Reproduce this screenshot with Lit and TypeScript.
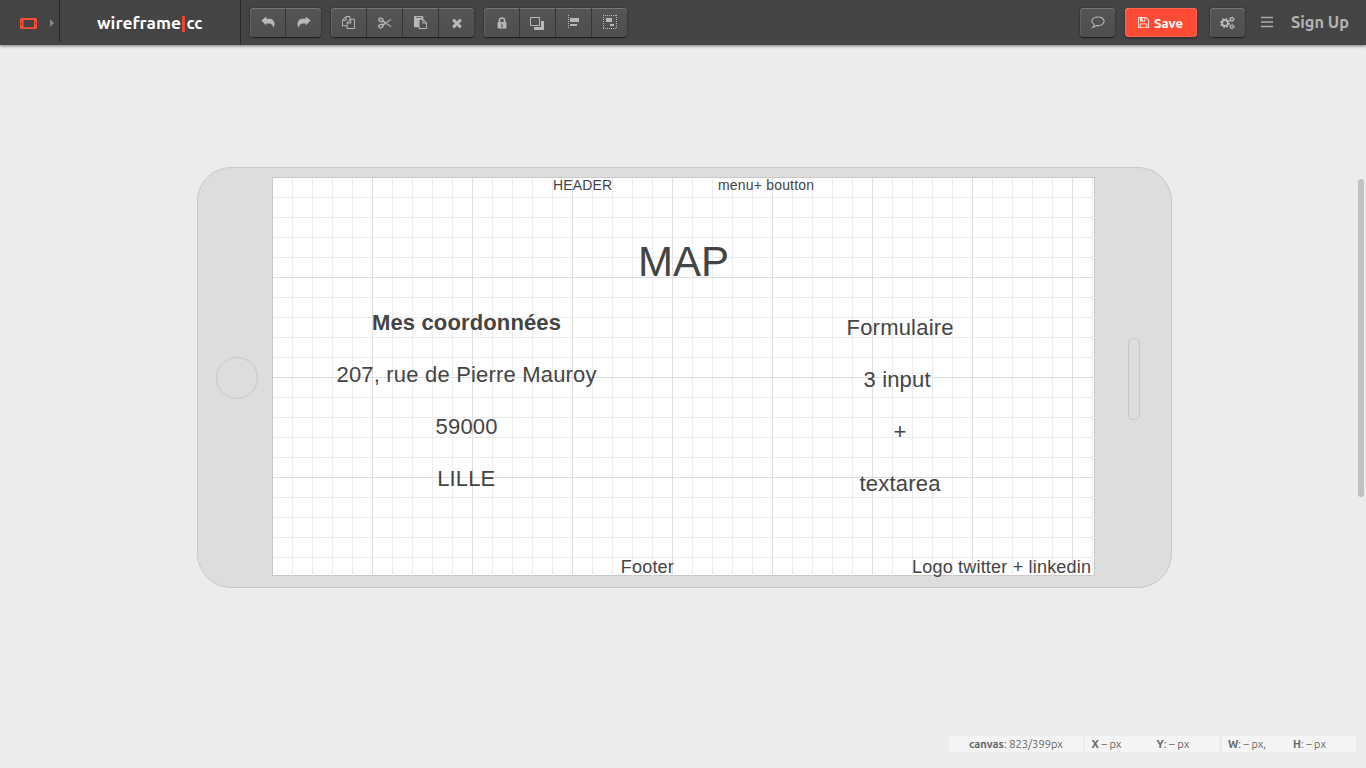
import { LitElement, html, svg, css } from "lit";
import { customElement } from "lit/decorators.js";

const FA: Record<string, string> = {
  times: "M1490 1322q0 40-28 68l-136 136q-28 28-68 28t-68-28l-294-294-294 294q-28 28-68 28t-68-28l-136-136q-28-28-28-68t28-68l294-294-294-294q-28-28-28-68t28-68l136-136q28-28 68-28t68 28l294 294 294-294q28-28 68-28t68 28l136 136q28 28 28 68t-28 68l-294 294 294 294q28 28 28 68z",
  copy: "M1696 384q40 0 68 28t28 68v1216q0 40-28 68t-68 28h-960q-40 0-68-28t-28-68v-288h-544q-40 0-68-28t-28-68v-672q0-40 20-88t48-76l408-408q28-28 76-48t88-20h416q40 0 68 28t28 68v328q68-40 128-40h416zm-544 213l-299 299h299v-299zm-640-384l-299 299h299v-299zm196 647l316-316v-416h-384v416q0 40-28 68t-68 28h-416v640h512v-256q0-40 20-88t48-76zm956 804v-1152h-384v416q0 40-28 68t-68 28h-416v640h896z",
  paste: "M768 1664h896v-640h-416q-40 0-68-28t-28-68v-416h-384v1152zm256-1440v-64q0-13-9.5-22.5t-22.5-9.5h-704q-13 0-22.5 9.5t-9.5 22.5v64q0 13 9.5 22.5t22.5 9.5h704q13 0 22.5-9.5t9.5-22.5zm256 672h299l-299-299v299zm512 128v672q0 40-28 68t-68 28h-960q-40 0-68-28t-28-68v-160h-544q-40 0-68-28t-28-68v-1344q0-40 28-68t68-28h1088q40 0 68 28t28 68v328q21 13 36 28l408 408q28 28 48 76t20 88z",
  floppy: "M512 1536h768v-384h-768v384zm896 0h128v-896q0-14-10-38.5t-20-34.5l-281-281q-10-10-34-20t-39-10v416q0 40-28 68t-68 28h-576q-40 0-68-28t-28-68v-416h-128v1280h128v-416q0-40 28-68t68-28h832q40 0 68 28t28 68v416zm-384-928v-320q0-13-9.5-22.5t-22.5-9.5h-192q-13 0-22.5 9.5t-9.5 22.5v320q0 13 9.5 22.5t22.5 9.5h192q13 0 22.5-9.5t9.5-22.5zm640 32v928q0 40-28 68t-68 28h-1344q-40 0-68-28t-28-68v-1344q0-40 28-68t68-28h928q40 0 88 20t76 48l280 280q28 28 48 76t20 88z",
};

const fa = (name: string, size: number) =>
  html`<svg width=${size} height=${size} viewBox="0 0 1792 1792"><path fill="currentColor" d=${FA[name]} /></svg>`;

const undo = html`<svg width="14" height="13" viewBox="0 0 14 13"><path fill="currentColor" d="M.4 4.6 5.2.5v2.200h2.600c3.600 0 5.700 2 5.700 5.200 0 1.500-.4 2.900-1.200 4-.1-2.900-1.700-4.500-4.600-4.500H5.200v2z" /></svg>`;
const redo = html`<svg width="14" height="13" viewBox="0 0 14 13"><path fill="currentColor" d="M13.600 4.600 8.800.5v2.200H6.200C2.600 2.700.5 4.700.5 7.900c0 1.500.4 2.900 1.200 4 .1-2.900 1.700-4.500 4.600-4.500h2.500v2z" /></svg>`;
const cut = html`<svg width="14" height="12" viewBox="0 0 14 12" fill="none" stroke="currentColor">
  <ellipse cx="2.900" cy="2.900" rx="2.100" ry="1.600" transform="rotate(25 2.900 2.900)" stroke-width="1.400" />
  <ellipse cx="2.900" cy="9.100" rx="2.100" ry="1.600" transform="rotate(-25 2.900 9.100)" stroke-width="1.400" />
  <path d="M4.700 3.900 7.500 5.800M4.700 8.100 7.500 6.200" stroke-width="1.500" />
  <path d="M7 5.500 13 9.600M7 6.500 13 2.400" stroke-width="1.700" opacity=".65" /></svg>`;
const lock = html`<svg width="10" height="12" viewBox="0 0 10 12">
  <path d="M2.400 6V3.600a2.600 2.600 0 0 1 5.200 0V6" fill="none" stroke="currentColor" stroke-width="1.600" />
  <rect x=".6" y="5" width="8.800" height="6.400" rx=".9" fill="currentColor" />
  <path d="M5 6.600v3.200M4.200 9.700h1.600" stroke="#505050" stroke-width="1.100" /></svg>`;
const layers = html`<svg class="layers" width="14" height="13" viewBox="0 0 14 13">
  <path d="M.5.5h9v8h-9z" fill="none" stroke="currentColor" />
  <path d="M11 4h3v9H4v-3h7z" fill="currentColor" /></svg>`;
const align = html`<svg class="snap" width="11" height="14" viewBox="0 0 11 14">
  <path d="M.5 0v14" stroke="currentColor" stroke-dasharray="1 1" />
  <path d="M2 3h9v4H2zM2 9h7v2H2z" fill="currentColor" /></svg>`;
const group = html`<svg class="snap wide" width="14" height="14" viewBox="0 0 14 14">
  <path d="M0 .5h14M0 13.500h14M.5 0v14M13.500 0v14" stroke="currentColor" stroke-dasharray="1 1" />
  <path d="M3 3h6v4H3zM7 9h4v2H7z" fill="currentColor" /></svg>`;
const comment = html`<svg width="14" height="13" viewBox="0 0 14 13">
  <path d="M7 1C3.400 1 .9 2.900.9 5.300c0 1.500.9 2.700 2.300 3.500-.2 1-.6 1.800-1.300 2.600 1.500-.3 2.600-.9 3.500-1.900 5 .6 7.700-1.600 7.700-4.200C13.100 2.900 10.600 1 7 1z" fill="none" stroke="currentColor" stroke-width="1.100" /></svg>`;
const gears = html`<svg width="15" height="14" viewBox="0 0 15 14" fill="none" stroke="currentColor">
  <circle cx="5" cy="7" r="2.900" stroke-width="2" />
  <circle cx="5" cy="7" r="4.300" stroke-width="1.300" stroke-dasharray="1.700 1.677" />
  <circle cx="11.900" cy="3.300" r="1.600" stroke-width="1.200" />
  <circle cx="11.900" cy="3.300" r="2.400" stroke-width=".8" stroke-dasharray="1.200 1.313" />
  <circle cx="11.900" cy="10.600" r="1.600" stroke-width="1.200" />
  <circle cx="11.900" cy="10.600" r="2.400" stroke-width=".8" stroke-dasharray="1.200 1.313" /></svg>`;

/* Each note is centred on x; y is its baseline inside the artboard. */
const NOTES = [
  { t: "HEADER", x: 309.5, y: 12, s: 14, w: 59 },
  { t: "menu+ boutton", x: 493, y: 12, s: 14, w: 96 },
  { t: "MAP", x: 410.5, y: 98, s: 42, w: 91 },
  { t: "Mes coordonnées", x: 193.5, y: 152, s: 22, w: 189, b: true },
  { t: "207, rue de Pierre Mauroy", x: 193.5, y: 204, s: 22, w: 260 },
  { t: "59000", x: 193.5, y: 256, s: 22, w: 62 },
  { t: "LILLE", x: 193.2, y: 308, s: 22, w: 58 },
  { t: "Formulaire", x: 627, y: 157, s: 22, w: 107 },
  { t: "3 input", x: 624, y: 209, s: 22, w: 67 },
  { t: "+", x: 627, y: 261, s: 22, w: 13 },
  { t: "textarea", x: 627, y: 313, s: 22, w: 81 },
  { t: "Footer", x: 374.3, y: 395, s: 18, w: 53 },
  { t: "Logo twitter + linkedin", x: 728.5, y: 395, s: 18, w: 179 },
];

@customElement("app-root")
export class AppRoot extends LitElement {
  static styles = css`
    :host { display: block; height: 768px; overflow: hidden; background: #ececec; font-family: Ubuntu, "Noto Sans", sans-serif; }
    * { box-sizing: border-box; }
    svg { display: block; overflow: visible; flex: none; }
    .page { height: 768px; display: flex; flex-direction: column; position: relative; }
    .bar { height: 45px; flex: none; display: flex; background: #444; box-shadow: 0 1px 3px rgba(0,0,0,.5); color: #b8b8b8; }
    .device { width: 60px; height: 42px; border-right: 1px solid #292929; display: flex; align-items: center; padding: 4px 0 0 20px; gap: 13px; }
    .logo { width: 181px; border-right: 1px solid #292929; padding: 15px 0 0 37px; }
    .tools { display: flex; gap: 10px; padding: 8px 0 0 9px; flex: 1; }
    .group { display: flex; height: 29px; border-radius: 4px; background: linear-gradient(#555, #4e4e4e); box-shadow: inset 0 1px 0 #777, inset 1px 0 0 #626262, 0 1px 1px #1d1d1d, 0 0 2px #292929; }
    .btn { width: 36px; height: 29px; display: flex; align-items: center; justify-content: center; border-right: 1px solid #363636; }
    .btn:last-child { width: 35px; border-right: 0; }
    .layers { margin: 2px 1px 0 0; }
    .snap { margin-bottom: 1px; }
    .wide { margin-left: 1px; }
    .right { display: flex; padding: 8px 17px 0 0; }
    .save { width: 72px; height: 29px; margin: 0 13px 0 10px; border-radius: 4px; background: #ff4b33; color: #ffe9e5; display: flex; align-items: center; padding-left: 12px; gap: 4px; box-shadow: inset 0 0 0 1px #ff654f, inset 0 1px 0 #ff9788, 0 1px 2px #222; }
    .menu { margin: 9px 18px 0 16px; }
    .sign { margin-top: 3px; }
    .stage { flex: 1; padding: 122px 0 0 197px; }
    .phone { width: 975px; height: 421px; border: 1px solid #c8c8c8; border-radius: 34px; background: #ddd; display: flex; align-items: center; }
    .home { width: 42px; height: 42px; margin: 0 14px 0 18px; border: 1px solid #c8c8c8; border-radius: 50%; }
    .screen { width: 823px; height: 399px; border: 1px solid #c8c8c8; background: #fff; margin-bottom: 2px; }
    .speaker { width: 12px; height: 82px; margin: 2px 0 0 33px; border: 1px solid #c8c8c8; border-radius: 5px; }
    .status { height: 16px; margin: 0 10px 16px auto; display: flex; gap: 2px; }
    .cell { width: 134px; background: #f4f4f4; }
    .cell:last-child { margin-left: 1px; }
    .scroll { position: absolute; left: 1358px; top: 179px; width: 6px; height: 318px; border-radius: 3px; background: #c1c1c1; }
    .note { font-family: "Liberation Sans", Arial, sans-serif; fill: #444; text-anchor: middle; }
    .strong { font-weight: 700; }
    .mark { font-weight: 700; fill: #fff; font-size: 17px; }
    .label { font-weight: 700; fill: #fff; font-size: 13px; }
    .link { font-weight: 700; fill: #b4b4b4; font-size: 17px; }
    .small { font-size: 11px; fill: #666; }
  `;

  private grid() {
    const v = Array.from({ length: 41 }, (_, i) => (i + 1) * 20);
    const h = Array.from({ length: 19 }, (_, i) => (i + 1) * 20);
    return svg`
      ${v.map((x) => svg`<rect x=${x - 1} y="0" width="1" height="399" fill=${x % 100 ? "#ececec" : "#dedede"} />`)}
      ${h.map((y) => svg`<rect x="0" y=${y - 1} width="823" height="1" fill=${y % 100 ? "#ececec" : "#dedede"} />`)}`;
  }

  private small(x: number, bold: string, rest: string, w: number) {
    return svg`<text class="small" x=${x} y="12" textLength=${w} lengthAdjust="spacingAndGlyphs"><tspan class="strong">${bold}</tspan>${rest}</text>`;
  }

  render() {
    const btn = (icon: unknown) => html`<div class="btn">${icon}</div>`;
    return html`<div class="page">
      <header class="bar">
        <div class="device">
          <svg width="17" height="11" viewBox="0 0 17 11"><path fill="#ff4b33" fill-rule="evenodd" d="M1.500 0h14Q17 0 17 1.500v8Q17 11 15.500 11h-14Q0 11 0 9.500v-8Q0 0 1.500 0zM3.500 2v7.300H14V2zM1.200 4v3h.8V4zM15 4.700v1.600h1V4.700z" /></svg>
          <svg width="4" height="8" viewBox="0 0 4 8"><path d="M0 0 4 4 0 8z" fill="#888" /></svg>
        </div>
        <div class="logo"><svg width="107" height="18">
          <text class="mark" x="0" y="14" textLength="84" lengthAdjust="spacingAndGlyphs">wireframe</text>
          <rect x="85" y="1" width="3" height="16" fill="#ea4631" />
          <text class="mark" x="89.500" y="14" textLength="16" lengthAdjust="spacingAndGlyphs">cc</text>
        </svg></div>
        <div class="tools">
          <div class="group">${btn(undo)}${btn(redo)}</div>
          <div class="group">${btn(fa("copy", 13))}${btn(cut)}${btn(fa("paste", 13))}${btn(fa("times", 14))}</div>
          <div class="group">${btn(lock)}${btn(layers)}${btn(align)}${btn(group)}</div>
        </div>
        <div class="right">
          <div class="group">${btn(comment)}</div>
          <div class="save">${fa("floppy", 13)}<svg width="30" height="16"><text class="label" x="0" y="13" textLength="29" lengthAdjust="spacingAndGlyphs">Save</text></svg></div>
          <div class="group">${btn(gears)}</div>
          <svg class="menu" width="12" height="11"><path d="M0 .5h12M0 5h12M0 9.500h12" stroke="#aaa" stroke-width="1.300" /></svg>
          <svg class="sign" width="58" height="22"><text class="link" x="0" y="17" textLength="58" lengthAdjust="spacingAndGlyphs">Sign Up</text></svg>
        </div>
      </header>
      <main class="stage">
        <div class="phone">
          <div class="home"></div>
          <div class="screen"><svg width="821" height="397">
            ${this.grid()}
            ${NOTES.map((n) => svg`<text class=${n.b ? "note strong" : "note"} x=${n.x} y=${n.y} font-size=${n.s} textLength=${n.w}>${n.t}</text>`)}
          </svg></div>
          <div class="speaker"></div>
        </div>
      </main>
      <footer class="status">
        <div class="cell"><svg width="134" height="16">${this.small(20, "canvas", ": 823/399px", 94)}</svg></div>
        <div class="cell"><svg width="134" height="16">${this.small(6.5, "X", " – px", 30)}${this.small(71.500, "Y", ": – px", 33)}</svg></div>
        <div class="cell"><svg width="134" height="16">${this.small(6, "W", ": – px,", 38)}${this.small(71, "H", ": – px", 33)}</svg></div>
      </footer>
      <div class="scroll"></div>
    </div>`;
  }
}
